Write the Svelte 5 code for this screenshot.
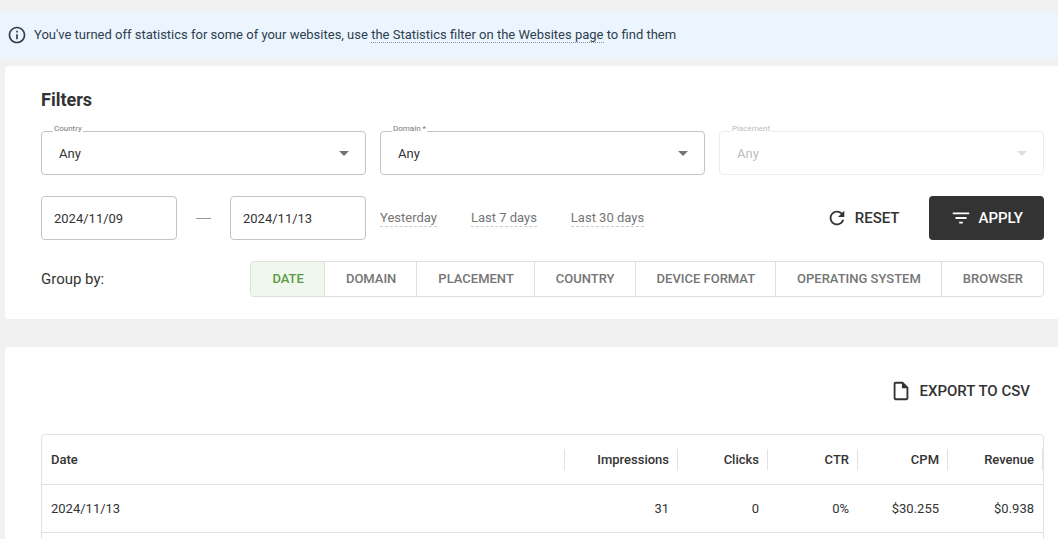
<script lang="ts">
  type Filter = { id: string; label: string; disabled?: boolean }

  const filters: Filter[] = [
    { id: 'country', label: 'Country' },
    { id: 'domain', label: 'Domain *' },
    { id: 'placement', label: 'Placement', disabled: true },
  ]
  const presets = ['Yesterday', 'Last 7 days', 'Last 30 days']
  const groups = [
    'Date',
    'Domain',
    'Placement',
    'Country',
    'Device format',
    'Operating system',
    'Browser',
  ]
  const columns = ['Date', 'Impressions', 'Clicks', 'CTR', 'CPM', 'Revenue']
  const rows = [['2024/11/13', '31', '0', '0%', '$30.255', '$0.938']]

  let from = $state('2024/11/09')
  let to = $state('2024/11/13')
  let groupBy = $state('Date')
</script>

<div class="page">
  <div class="notice" role="status">
    <svg class="icon" viewBox="0 0 24 24" aria-hidden="true">
      <path
        d="M11 7h2v2h-2zm0 4h2v6h-2zm1-9C6.48 2 2 6.48 2 12s4.48 10 10 10 10-4.48 10-10S17.52 2 12 2zm0 18c-4.41 0-8-3.59-8-8s3.59-8 8-8 8 3.59 8 8-3.59 8-8 8z"
      />
    </svg>
    <p>
      You've turned off statistics for some of your websites, use
      <a href="#websites">the Statistics filter on the Websites page</a> to find them
    </p>
  </div>

  <section class="card">
    <h2>Filters</h2>
    <div class="grid">
      {#each filters as f (f.id)}
        <div class="field" class:disabled={f.disabled}>
          <label for={f.id}>{f.label}</label>
          <select id={f.id} disabled={f.disabled}>
            <option>Any</option>
          </select>
          <svg class="arrow" viewBox="0 0 10 5" aria-hidden="true"><path d="M0 0l5 5 5-5z" /></svg>
        </div>
      {/each}

      <div class="range">
        <input type="text" aria-label="From" bind:value={from} />
        <span class="dash"></span>
        <input type="text" aria-label="To" bind:value={to} />
      </div>
      <div class="presets">
        {#each presets as p}
          <button type="button">{p}</button>
        {/each}
      </div>
      <div class="actions">
        <button type="button" class="action">
          <svg class="icon" viewBox="0 0 24 24" aria-hidden="true">
            <path
              d="M17.65 6.35C16.2 4.9 14.21 4 12 4c-4.42 0-7.99 3.58-7.99 8s3.57 8 7.99 8c3.73 0 6.84-2.55 7.73-6h-2.08c-.82 2.33-3.04 4-5.65 4-3.31 0-6-2.69-6-6s2.69-6 6-6c1.66 0 3.14.69 4.22 1.78L13 11h7V4l-2.35 2.35z"
            />
          </svg>
          Reset
        </button>
        <button type="button" class="action apply">
          <svg class="icon" viewBox="0 0 24 24" aria-hidden="true">
            <path d="M10 18h4v-2h-4v2zM3 6v2h18V6H3zm3 7h12v-2H6v2z" />
          </svg>
          Apply
        </button>
      </div>
    </div>

    <div class="grouping">
      <span id="group-label">Group by:</span>
      <div class="toggles" role="group" aria-labelledby="group-label">
        {#each groups as g}
          <button
            type="button"
            class:active={groupBy === g}
            aria-pressed={groupBy === g}
            onclick={() => (groupBy = g)}>{g}</button
          >
        {/each}
      </div>
    </div>
  </section>

  <section class="card report">
    <div class="toolbar">
      <button type="button" class="action">
        <svg class="icon" viewBox="0 0 24 24" aria-hidden="true">
          <path
            d="M14 2H6c-1.100 0-1.990.9-1.990 2L4 20c0 1.100.89 2 1.990 2H18c1.100 0 2-.9 2-2V8l-6-6zM6 20V4h7v5h5v11H6z"
          />
        </svg>
        Export to CSV
      </button>
    </div>
    <div class="table-wrap">
      <table>
        <thead>
          <tr>
            {#each columns as c}
              <th class={c.toLowerCase()}>{c}</th>
            {/each}
          </tr>
        </thead>
        <tbody>
          {#each rows as row}
            <tr>
              {#each row as cell}
                <td>{cell}</td>
              {/each}
            </tr>
          {/each}
        </tbody>
      </table>
    </div>
  </section>
</div>

<style>
  :global(body) {
    background: #f1f1f1;
  }
  .page {
    box-sizing: border-box;
    display: flex;
    flex-direction: column;
    height: 100vh;
    padding-top: 11px;
    overflow: hidden;
    font-family: Roboto, 'Liberation Sans', sans-serif;
    font-size: 13px;
    line-height: 20px;
    color: #333;
  }
  button,
  input,
  select {
    font: inherit;
    color: inherit;
  }
  button {
    padding: 0;
    border: 0;
    background: none;
    cursor: pointer;
  }
  .icon {
    flex: none;
    width: 20px;
    height: 20px;
    fill: currentColor;
  }

  .notice {
    display: flex;
    align-items: center;
    gap: 7px;
    flex: none;
    height: 48px;
    padding-left: 7px;
    background: #ecf5fe;
    color: #2c3e50;
  }
  .notice p {
    margin: 0;
  }
  .notice a {
    color: inherit;
    text-decoration: none;
    border-bottom: 1px dotted #8796a5;
  }

  .card {
    flex: none;
    margin: 7px 0 0 5px;
    padding: 23px 14px 22px 36px;
    border-radius: 4px 0 0 4px;
    background: #fff;
  }
  h2 {
    margin: 0 0 20px;
    font-size: 18px;
    line-height: 22px;
    font-weight: 700;
  }
  .grid {
    display: grid;
    grid-template-columns: repeat(3, 1fr);
    gap: 21px 14px;
  }

  .field {
    position: relative;
  }
  .field label {
    position: absolute;
    top: -7px;
    left: 12px;
    padding: 0 1px;
    background: #fff;
    font-size: 8px;
    line-height: 10px;
    color: #777;
  }
  .field select,
  .range input {
    box-sizing: border-box;
    display: block;
    width: 100%;
    height: 44px;
    margin: 0;
    border: 1px solid #c4c4c4;
    border-radius: 4px;
    background: #fff;
  }
  .field select {
    appearance: none;
    padding: 2px 32px 0 17px;
    opacity: 1;
  }
  .arrow {
    position: absolute;
    top: 20px;
    right: 17px;
    width: 10px;
    height: 5px;
    fill: #757575;
    pointer-events: none;
  }
  .disabled label,
  .disabled select {
    color: #bdbdbd;
  }
  .disabled select {
    border-color: #ececec;
  }
  .disabled .arrow {
    fill: #dedede;
  }

  .range {
    display: flex;
    align-items: center;
    justify-content: space-between;
  }
  .range input {
    width: 136px;
    padding: 0 12px;
  }
  .dash {
    width: 15px;
    height: 1px;
    background: #999;
  }
  .presets {
    display: flex;
    align-items: center;
    gap: 34px;
  }
  .presets button {
    line-height: 16px;
    color: #757575;
    border-bottom: 1px dashed #ccc;
    white-space: nowrap;
  }
  .actions {
    display: flex;
    justify-content: flex-end;
    gap: 29px;
  }
  .action {
    display: flex;
    align-items: center;
    gap: 7px;
    height: 44px;
    font-size: 15px;
    font-weight: 500;
    text-transform: uppercase;
    white-space: nowrap;
  }
  .action .icon {
    width: 22px;
    height: 22px;
  }
  .apply {
    padding: 0 21px;
    border-radius: 4px;
    background: #333;
    color: #fff;
  }

  .grouping {
    display: flex;
    align-items: center;
    justify-content: space-between;
    margin-top: 21px;
    font-size: 15px;
  }
  .toggles {
    display: flex;
    border: 1px solid #dedede;
    border-radius: 4px;
    overflow: hidden;
  }
  .toggles button {
    height: 34px;
    padding: 0 20px 0 21px;
    font-size: 13px;
    font-weight: 500;
    text-transform: uppercase;
    color: #757575;
    white-space: nowrap;
  }
  .toggles button + button {
    border-left: 1px solid #dedede;
  }
  .toggles .active {
    background: #f0f8ee;
    color: #5a9a47;
  }

  .report {
    flex: 1 0 auto;
    margin-top: 28px;
    padding-top: 22px;
  }
  .toolbar {
    display: flex;
    justify-content: flex-end;
    padding-right: 14px;
    margin-bottom: 21px;
  }
  .table-wrap {
    min-height: 160px;
    border: 1px solid #e2e2e2;
    border-radius: 4px;
  }
  table {
    width: 100%;
    table-layout: fixed;
    border-spacing: 0;
  }
  th,
  td {
    box-sizing: border-box;
    padding: 0 9px;
    border-bottom: 1px solid #e2e2e2;
    text-align: right;
  }
  th {
    position: relative;
    width: 90px;
    height: 50px;
    font-weight: 500;
  }
  th::after {
    content: '';
    position: absolute;
    top: 14px;
    right: 0;
    width: 1px;
    height: 21px;
    background: #e2e2e2;
  }
  td {
    height: 48px;
  }
  th:first-child,
  td:first-child {
    text-align: left;
  }
  .date {
    width: auto;
  }
  .impressions {
    width: 113px;
  }
  .revenue {
    width: 95px;
  }
</style>
